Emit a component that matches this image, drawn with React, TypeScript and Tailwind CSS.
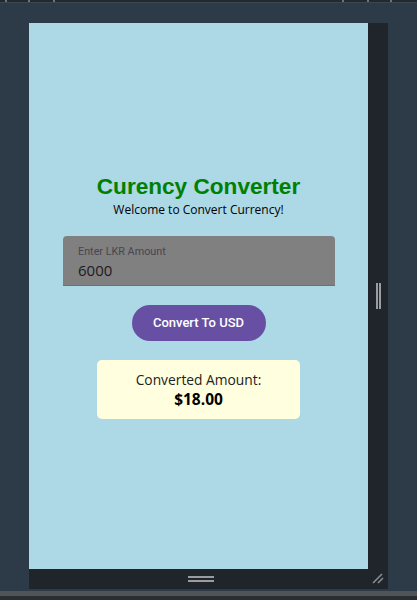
import React from "react";

export default function App() {
  return (
    <div className="w-[417px] h-[600px] bg-[#2c3b47] flex flex-col overflow-hidden relative">
      {/* top strip */}
      <div className="h-[2px] bg-[#22282d] relative shrink-0">
        <div className="absolute left-[5px] top-0 w-[2px] h-[2px] bg-[#6b747c]" />
        <div className="absolute left-[28px] top-0 w-[2px] h-[2px] bg-[#6b747c]" />
        <div className="absolute left-[53px] top-0 w-[2px] h-[2px] bg-[#6b747c]" />
        <div className="absolute left-[342px] top-0 w-[2px] h-[2px] bg-[#6b747c]" />
        <div className="absolute left-[367px] top-0 w-[2px] h-[2px] bg-[#6b747c]" />
        <div className="absolute left-[390px] top-0 w-[2px] h-[2px] bg-[#6b747c]" />
      </div>
      <div className="h-[1px] bg-[#3b4852] shrink-0" />
      <div className="flex-1 pt-[20px] pl-[29px]">
        <div className="w-[359px] flex flex-col">
          <div className="flex">
            <div className="w-[339px] h-[546px] bg-[#add8e6] flex flex-col items-center justify-center">
              <h1
                className="text-[22.6px] font-bold text-[#008000] leading-[26px]"
                style={{ fontFamily: '"Liberation Sans", Arial, sans-serif' }}
              >
                Curency Converter
              </h1>
              <p
                className="text-[12px] text-black leading-[16px] mt-[2px]"
                style={{ fontFamily: '"Open Sans", sans-serif' }}
              >
                Welcome to Convert Currency!
              </p>
              <div className="w-[272px] h-[50px] mt-[18px] ml-[1px] bg-[#808080] rounded-t-[4px] border-b border-[#6f6f6f] flex flex-col pl-[15px] pt-[10px]">
                <span
                  className="text-[10.8px] text-[#48454e] leading-[12px]"
                  style={{ fontFamily: 'Roboto, sans-serif' }}
                >
                  Enter LKR Amount
                </span>
                <span
                  className="text-[15px] text-[#1d1b20] leading-[18px] mt-[3px]"
                  style={{ fontFamily: '"Open Sans", sans-serif' }}
                >
                  6000
                </span>
              </div>
              <button
                className="mt-[19px] w-[134px] h-[36px] rounded-full bg-[#6750a4] text-white text-[13px] font-medium"
                style={{ fontFamily: 'Roboto, sans-serif' }}
              >
                Convert To USD
              </button>
              <div className="w-[203px] h-[59px] mt-[19px] bg-[#ffffe0] rounded-[5px] flex flex-col items-center justify-center">
                <span
                  className="text-[13.8px] text-[#222] leading-[19px]"
                  style={{ fontFamily: '"Open Sans", sans-serif' }}
                >
                  Converted Amount:
                </span>
                <span
                  className="text-[15.5px] font-bold text-black leading-[20px]"
                  style={{ fontFamily: '"Open Sans", sans-serif' }}
                >
                  $18.00
                </span>
              </div>
            </div>
            <div className="w-[20px] h-[546px] bg-[#1f252b] flex items-center justify-center gap-[1px]">
              <div className="w-[2px] h-[26px] bg-[#9a9da0]" />
              <div className="w-[2px] h-[26px] bg-[#9a9da0]" />
            </div>
          </div>
          <div className="h-[20px] w-[359px] bg-[#1f252b] relative flex flex-col items-center justify-center gap-[2px]">
            <div className="w-[26px] h-[2px] bg-[#9a9da0] ml-[-15px]" />
            <div className="w-[26px] h-[2px] bg-[#9a9da0] ml-[-15px]" />
            <svg className="absolute right-[4px] bottom-[5px]" width="12" height="12" viewBox="0 0 12 12">
              <line x1="1" y1="11" x2="10" y2="2" stroke="#8a8d90" strokeWidth="1.6" />
              <line x1="6" y1="11" x2="11" y2="6" stroke="#8a8d90" strokeWidth="1.6" />
            </svg>
          </div>
        </div>
      </div>
      <div className="h-[5px] bg-[#50555a] shrink-0 mt-[2px]" />
      <div className="h-[4px] bg-[#2a2d31] shrink-0" />
    </div>
  );
}
